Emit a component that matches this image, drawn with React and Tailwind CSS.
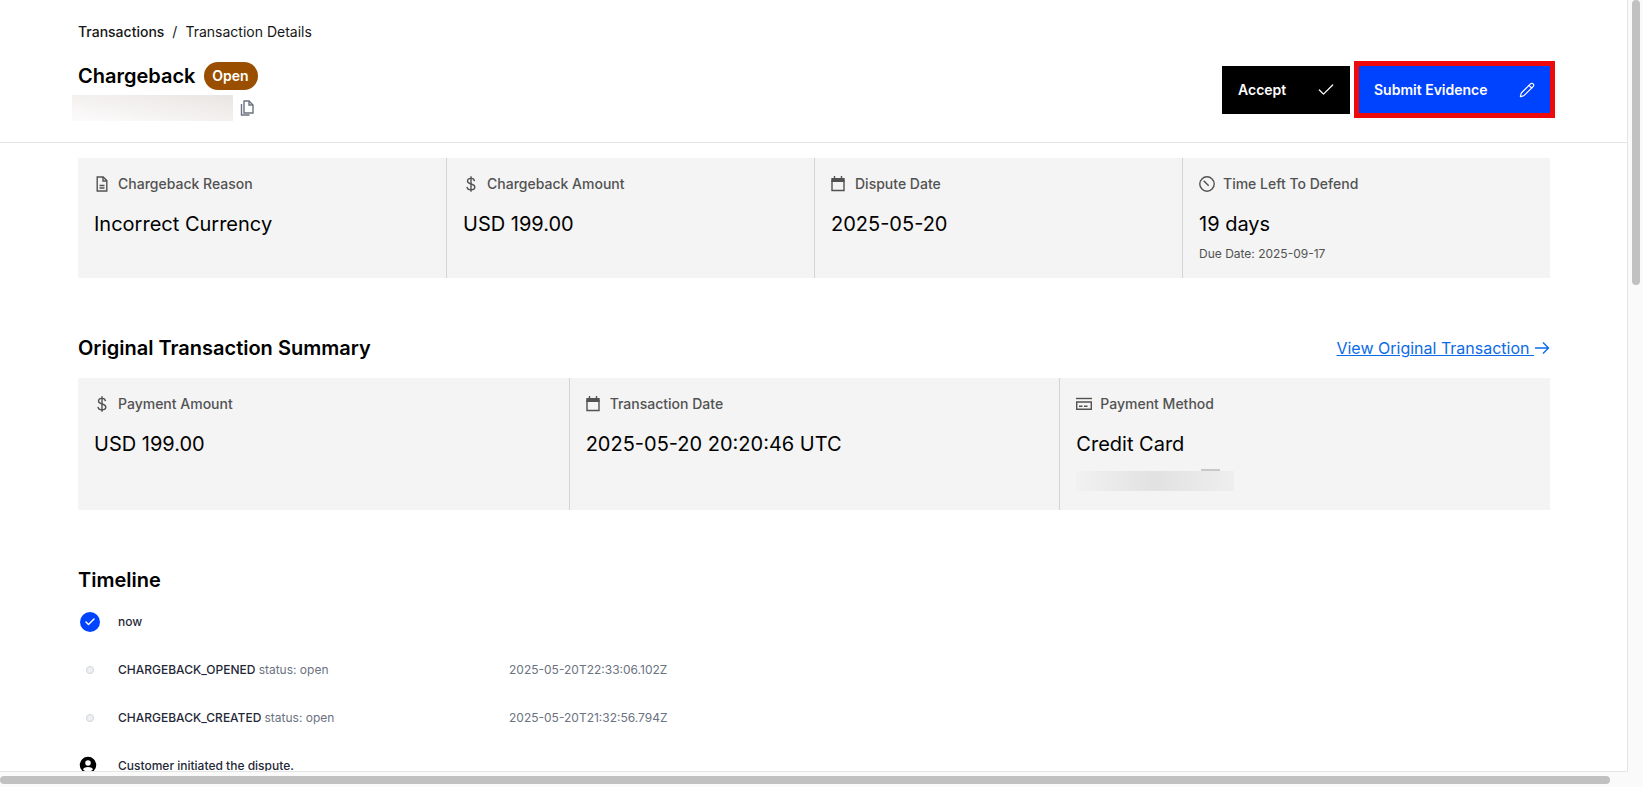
import React from "react";
import { Check, Pencil } from "lucide-react";

const I = ({ children }) => (
  <svg viewBox="0 0 16 16" className="w-4 h-4 shrink-0" fill="none" stroke="currentColor" strokeWidth="1.4">{children}</svg>
);
const DocIcon = () => (
  <I><path d="M3.200 1h6l3.600 3.600V15H3.200z" /><path d="M9 1v4h3.800" /><path d="M5.500 9.500h5M5.500 12h5" /></I>
);
const DollarIcon = () => (
  <I><path d="M11.500 5.200C11.300 3.500 9.900 2.400 8 2.400S4.500 3.500 4.500 5.100c0 3.900 7.300 2 7.300 5.900 0 1.800-1.600 2.800-3.800 2.800s-3.800-1-4-2.900" /><path d="M8 .3v15.400" /></I>
);
const CalIcon = () => (
  <I><path d="M1 5h12v9.500H1z" /><path d="M.3 2h13.400v4H.3z" fill="currentColor" stroke="none" /><path d="M3.500 0v3M10.500 0v3" /></I>
);
const ClockIcon = () => (
  <I><circle cx="8" cy="8" r="7.200" /><path d="M4.700 4.700l5 5" /></I>
);
const CardIcon = () => (
  <I><path d="M0 2.500h16" /><path d="M.7 6h14.600v7.300H.7z" /><path d="M3 10.300h3.500M8 10.300h3.500" /></I>
);
const CopyIcon = () => (
  <svg viewBox="0 0 14 16" className="w-[14px] h-4 text-[#6b7280]" fill="none" stroke="currentColor" strokeWidth="1.4">
    <path d="M4 1h5l4 4v8H4z" /><path d="M9 1v4h4" /><path d="M1.500 4v11h8" />
  </svg>
);
const Label = ({ icon, children }) => (
  <div className="flex items-center gap-2 text-sm font-medium leading-5 text-[#525252]">{icon}<span>{children}</span></div>
);
const Stat = ({ icon, label, value, children, first }) => (
  <div className={`px-4 pt-[16px] ${first ? "" : "border-l border-[#d4d4d4]"}`}>
    <Label icon={icon}>{label}</Label>
    <div className="mt-[16px] text-xl leading-7 text-black">{value}</div>
    {children}
  </div>
);
const Row = ({ name, time }) => (
  <div className="h-12 flex items-center">
    <div className="w-[40px] pl-2">
      <div className="w-2 h-2 rounded-full bg-[#eef0f3] border border-[#d1d5db]" />
    </div>
    <div className="w-[391px] text-xs font-medium text-[#1f2937]">{name} <span className="font-normal text-[#6b7280]">status: open</span></div>
    <div className="text-xs text-[#6b7280]">{time}</div>
  </div>
);

export default function App() {
  return (
    <div className="h-screen flex flex-col overflow-hidden bg-[#fafafa] text-black font-['Inter',sans-serif]">
      <div className="flex-1 min-h-0 flex">
        <main className="flex-1 min-w-0 overflow-hidden bg-white border-r border-b border-[#e5e5e5]">
          <header className="h-[143px] border-b border-[#e5e5e5] pl-[78px] pr-[72px] pt-[22px] flex justify-between">
            <div>
              <div className="flex items-center gap-2 text-sm leading-5 text-[#161616]">
                <span className="font-medium">Transactions</span><span>/</span><span>Transaction Details</span>
              </div>
              <div className="mt-[20px] flex items-center gap-2">
                <h1 className="text-xl leading-7 font-semibold">Chargeback</h1>
                <span className="h-7 w-[54px] rounded-full bg-[#9a4f00] text-white text-sm font-semibold flex items-center justify-center">Open</span>
              </div>
              <div className="mt-[5px] -ml-[6px] flex items-center gap-[7px]">
                <div className="w-[161px] h-[26px] bg-gradient-to-tr from-[#fdfcfc] to-[#e9e5e3]" />
                <CopyIcon />
              </div>
            </div>
            <div className="flex items-center gap-1 mt-[39px] self-start">
              <button className="w-[128px] h-12 bg-black text-white text-sm font-semibold flex items-center justify-between pl-[16px] pr-[14px]">
                Accept <Check className="w-5 h-5" strokeWidth={1.5} />
              </button>
              <button className="w-[201px] h-[57px] border-[5px] border-[#ee0a0a] bg-[#0043ff] text-white text-sm font-semibold flex items-center justify-between pl-[15px] pr-[15px]">
                Submit Evidence <Pencil className="w-4 h-4" strokeWidth={1.75} />
              </button>
            </div>
          </header>
          <div className="pl-[78px] pr-[77px] pt-[15px]">
            <section className="h-[120px] bg-[#f4f4f4] grid grid-cols-4">
              <Stat first icon={<DocIcon />} label="Chargeback Reason" value="Incorrect Currency" />
              <Stat icon={<DollarIcon />} label="Chargeback Amount" value="USD 199.00" />
              <Stat icon={<CalIcon />} label="Dispute Date" value="2025-05-20" />
              <Stat icon={<ClockIcon />} label="Time Left To Defend" value="19 days">
                <div className="mt-[8px] text-xs leading-4 text-[#525252]">Due Date: 2025-09-17</div>
              </Stat>
            </section>
            <div className="mt-[56px] h-7 flex items-center justify-between">
              <h2 className="text-xl leading-7 font-semibold">Original Transaction Summary</h2>
              <a className="text-base leading-6 text-[#0b6be6] flex items-center">
                <span className="underline whitespace-pre">View Original Transaction </span>
                <svg viewBox="0 0 16 16" className="w-4 h-4" fill="none" stroke="currentColor" strokeWidth="1.4"><path d="M1 8h13.500M9 2.500L14.500 8 9 13.500" /></svg>
              </a>
            </div>
            <section className="mt-[16px] h-[132px] bg-[#f4f4f4] grid grid-cols-3">
              <Stat first icon={<DollarIcon />} label="Payment Amount" value="USD 199.00" />
              <Stat icon={<CalIcon />} label="Transaction Date" value="2025-05-20 20:20:46 UTC" />
              <Stat icon={<CardIcon />} label="Payment Method" value="Credit Card">
                <div className="mt-[11px] ml-[125px] w-[19px] h-[2px] bg-[#c8c8c8]" />
                <div className="w-[158px] h-[20px] bg-gradient-to-r from-[#f1f1f1] via-[#e2e2e2] to-[#eeeeee]" />
              </Stat>
            </section>
            <h2 className="mt-[56px] text-xl leading-7 font-semibold">Timeline</h2>
            <div className="mt-[4px]">
              <div className="h-12 flex items-center">
                <div className="w-[40px] pl-[2px]">
                  <div className="w-5 h-5 rounded-full bg-[#0043ff] text-white flex items-center justify-center"><Check className="w-3 h-3" strokeWidth={3} /></div>
                </div>
                <div className="text-xs font-medium text-[#1f2937]">now</div>
              </div>
              <Row name="CHARGEBACK_OPENED" time="2025-05-20T22:33:06.102Z" />
              <Row name="CHARGEBACK_CREATED" time="2025-05-20T21:32:56.794Z" />
              <div className="h-12 flex items-center">
                <div className="w-[40px]">
                  <svg viewBox="0 0 24 24" className="w-[18px] h-[18px] ml-[1px] -mt-[3px] text-black" fill="currentColor">
                    <path d="M12 1a11 11 0 1 0 0 22 11 11 0 0 0 0-22zm0 4.500a3.700 3.700 0 1 1 0 7.400 3.700 3.700 0 0 1 0-7.400zm0 15.400c-2.700 0-5.100-1.200-6.700-3.200 1.100-1.900 4-2.900 6.700-2.900s5.600 1 6.700 2.900c-1.600 2-4 3.200-6.700 3.200z" />
                  </svg>
                </div>
                <div className="text-xs font-medium text-[#1f2937]">Customer initiated the dispute.</div>
              </div>
            </div>
          </div>
        </main>
        <div className="w-[15px] shrink-0 pl-1">
          <div className="w-2 h-[285px] rounded-full bg-[#c1c1c1]" />
        </div>
      </div>
      <div className="h-[15px] shrink-0 pt-1">
        <div className="w-[1610px] h-2 rounded-full bg-[#c1c1c1]" />
      </div>
    </div>
  );
}
